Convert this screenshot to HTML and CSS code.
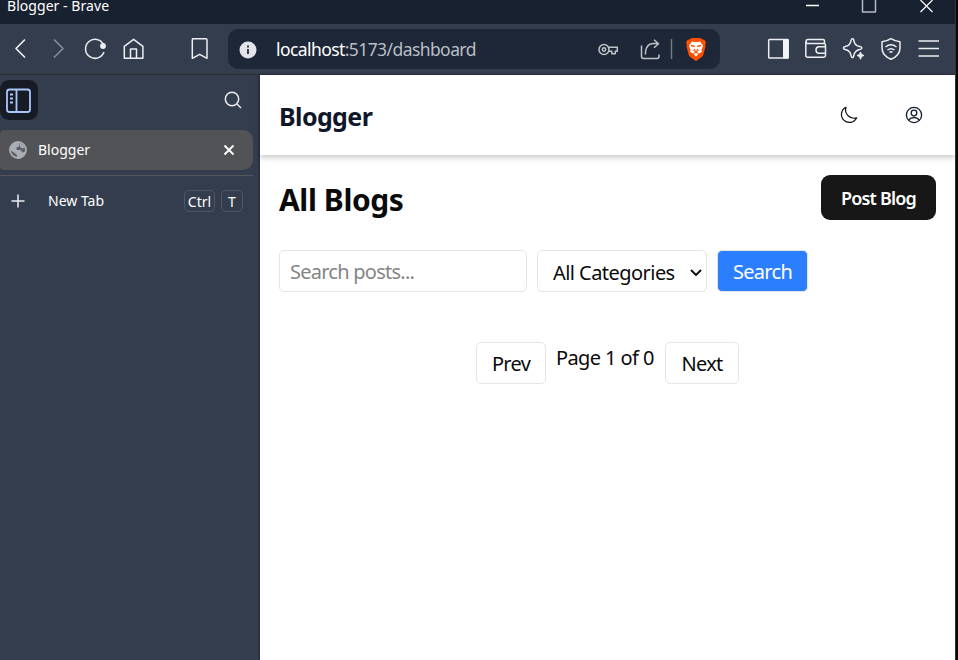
FILE: index.html
```html
<!DOCTYPE html>
<html lang="en">
<head>
<meta charset="utf-8">
<title>Blogger</title>
<link rel="stylesheet" href="styles.css">
</head>
<body>
<div class="screen">
  <div class="window">
    <header class="titlebar">
      <span class="window-title">Blogger - Brave</span>
      <svg class="window-controls" width="155" height="24" viewBox="800 0 155 24">
        <path d="M806 5.500h13" stroke="#fff"/>
        <rect x="862.500" y="-1" width="13" height="13" stroke="#b4b9c3"/>
        <path d="M920.500 0l12 12M932.500 0l-12 12" stroke="#fff" stroke-width="1.200"/>
      </svg>
    </header>
    <nav class="toolbar">
      <svg width="38" height="50" viewBox="1 24 38 50"><path d="M25 39.500L16 48.500l9 9" stroke-width="1.700"/></svg>
      <svg width="38" height="50" viewBox="39 24 38 50"><path d="M54 39.500l9 9-9 9" stroke="#858b97" stroke-width="1.700"/></svg>
      <svg width="38" height="50" viewBox="77 24 38 50"><path d="M103.500 44.500A9.500 9.500 0 1 0 104 52"/><circle cx="103" cy="46" r="2.900" fill="#eceef1" stroke="none"/></svg>
      <svg width="38" height="50" viewBox="115 24 38 50"><path d="M124.300 46.300l9.300-7 9.300 7v12H124.300zM130.500 58v-9h6v9"/></svg>
      <svg class="bookmark" width="38" height="50" viewBox="181 24 38 50"><path d="M192.500 38.700h13.500q1 0 1 1v18.600l-7.300-4-7.400 4V39.700q0-1 1-1z"/></svg>
      <div class="address">
        <svg width="40" height="40" viewBox="228 29 40 40"><circle cx="248" cy="50" r="8.500" fill="#e2e4e9" stroke="none"/><path d="M248 49v5M248 45.500v2" stroke="#202a3b" stroke-width="1.800"/></svg>
        <span class="url"><b>localhost</b>:5173/dashboard</span>
        <svg class="address-tools" width="130" height="40" viewBox="590 29 130 40">
          <g stroke="#bfc3ca"><circle cx="604" cy="49.500" r="5"/><circle cx="604" cy="49.500" r="1.700"/><path d="M608.500 47.300h8.800v4h-2v2.500h-3.500v-2.500h-3.500"/>
          <path d="M641.500 45.500v10.800q0 2.200 2.200 2.200h13.300q2 0 2-2.200v-1.800M645.500 54.500v-2.500q1-8.500 8-8.500h4.500M654 39.700l4.500 4-4.500 4"/></g>
          <path d="M671.500 39v20" stroke="#737985"/>
          <path d="M689.500 39.500l2-1.500h9l2 1.500 2 .3 1.500 3-.8 2 .3 1.700-2.300 8.500q-.5 1.500-1.700 2.300l-5.500 3.700-5.500-3.700q-1.200-.8-1.700-2.300l-2.300-8.500.3-1.700-.8-2 1.500-3z" fill="#ff5000" stroke="none"/>
          <path d="M692 41.500l4 .7 4-.7 3 4-1.500 4.500.3 2-2.800 1.500-3 3-3-3-2.800-1.500.3-2-1.500-4.500z" fill="#fff" stroke="none"/>
          <path d="M691 45.500l3.700 1M701 45.500l-3.700 1M695 49l-1 1.500 2 1.300 2-1.300-1-1.500M693.500 53.500l2.500-1 2.500 1" stroke="#ff5000" stroke-width="1.300"/>
        </svg>
      </div>
      <svg class="tools" width="195" height="50" viewBox="760 24 195 50">
        <rect x="768.700" y="39.500" width="19.500" height="18.500" rx=".8"/><path d="M783 39h5.500v19.500H783z" fill="#f3f4f6" stroke="none"/>
        <path d="M824.500 44v-3q0-1.500-1.500-1.500H808q-2 0-2 2.200 0 1.800 2 1.800h15.500q2 0 2 2v10q0 1.700-1.700 1.700h-16q-2 0-2-2v-14M825.500 46.700h-6.500q-3 0-3 3.300t3 3.300h6.500"/>
        <path d="M852.500 38.800q1.200 0 1.400 1.800.7 5 5.800 6 2.200.4 2.200 1.400t-2.200 1.600q-5 1-5.800 5.800-.3 2.200-1.400 2.200t-1.500-2.200q-.8-4.800-5.800-5.800-1.800-.4-1.800-1.600t1.800-1.400q5-1 5.800-6 .3-1.800 1.500-1.800z"/><path d="M860.500 52l1 2.500 2.500 1-2.500 1-1 2.700-1-2.700-2.500-1 2.500-1z" fill="#eceef1" stroke-width="1"/>
        <path d="M891 38.700q4 2.700 9 3v6.300q0 7.500-9 11.300-9-3.800-9-11.300v-6.300q5-.3 9-3z"/><path d="M885.500 47q5.500-4.300 11 0M887.500 50q3.500-2.700 7 0M889.500 52.300q1.500-1.200 3 0"/>
        <path d="M918.500 41h20.500M918.500 48.500h20.500M918.500 56h20.500" stroke-width="1.700"/>
      </svg>
    </nav>
    <div class="workspace">
      <aside class="sidebar">
        <div class="sidebar-top">
          <div class="panel-toggle"><svg width="38" height="40" viewBox="0 80 38 40"><g stroke="#a9c7fb" stroke-width="1.800"><rect x="7" y="89.500" width="23" height="22.500" rx="2.500"/><path d="M16.500 90v22M10 94.500h3M10 98.500h3M10 102.500h3"/></g></svg></div>
          <svg width="20" height="20" viewBox="223 90 20 20"><circle cx="232" cy="99" r="6.700"/><path d="M237 104l4 4"/></svg>
        </div>
        <div class="tab">
          <svg width="20" height="20" viewBox="8 140 20 20"><circle cx="18" cy="150" r="8" fill="#5d6066" stroke="#a9adb4" stroke-width="1.800"/><path d="M10 150q0-6 6.500-8l3 1v3l-3 1.500v2.500h4l2 2.500 3-1q-1 6-7 7.500l-1.500-1v-3l-3-2.500zM20 143l5 4-3 1.500-2-2z" fill="#a9adb4" stroke="none"/></svg>
          <span class="tab-name">Blogger</span>
          <svg class="close" width="12" height="12" viewBox="0 0 12 12"><path d="M1.500 1.500l9 9M10.500 1.500l-9 9" stroke="#fff" stroke-width="1.900"/></svg>
        </div>
        <div class="new-tab">
          <svg width="14" height="14" viewBox="0 0 14 14"><path d="M7 .5v13M.5 7h13"/></svg>
          <span class="new-name">New Tab</span>
          <kbd class="key key-ctrl">Ctrl</kbd><kbd class="key key-t">T</kbd>
        </div>
      </aside>
      <main class="page">
        <header class="site-header">
          <span class="brand">Blogger</span>
          <svg class="moon" width="20" height="20" viewBox="0 0 20 20"><path d="M7 2.200A8 8 0 1 0 17.700 12.800 8.500 8.500 0 0 1 7 2.200z" stroke="#111" stroke-width="1.200"/></svg>
          <svg width="20" height="20" viewBox="0 0 20 20"><g stroke="#111c30" stroke-width="1.300"><circle cx="10" cy="10" r="7.600"/><circle cx="10" cy="8" r="2.800"/><path d="M4.700 15q2-2.500 5.300-2.500t5.300 2.500"/></g></svg>
        </header>
        <div class="content">
          <div class="heading-row">
            <h1>All Blogs</h1>
            <button class="post">Post Blog</button>
          </div>
          <form class="filters">
            <input class="box query" type="text" placeholder="Search posts...">
            <div class="box category"><span>All Categories</span><svg width="14" height="10" viewBox="0 0 14 10"><path d="M2 2l5 5 5-5" stroke="#111" stroke-width="2"/></svg></div>
            <button class="box submit" type="button">Search</button>
          </form>
          <div class="pager">
            <button class="box prev">Prev</button>
            <span class="count">Page 1 of 0</span>
            <button class="box next">Next</button>
          </div>
        </div>
      </main>
    </div>
  </div>
  <div class="edge"></div>
</div>
</body>
</html>
```

FILE: styles.css
```css
* { box-sizing: border-box; }
body { margin: 0; overflow: hidden; font-family: "Noto Sans", "Open Sans", sans-serif; }
svg { display: block; flex: none; fill: none; stroke: #eceef1; stroke-width: 1.5; stroke-linejoin: round; }
button, input { font: inherit; margin: 0; }
.screen { display: flex; width: 958px; height: 660px; }
.window { display: flex; flex-direction: column; width: 955px; }
.edge { width: 3px; background: #080808; border-left: 1px solid #333; }

.titlebar { display: flex; justify-content: space-between; height: 24px; background: #182130; color: #fff; }
.window-title { margin: -4px 0 0 7px; font-size: 14px; line-height: 20px; letter-spacing: .05px; white-space: nowrap; }

.toolbar { display: flex; align-items: center; height: 51px; padding: 0 0 1px 1px; background: #343d4e; border-bottom: 1px solid #2b2d32; }
.bookmark { margin-left: 28px; }
.address { display: flex; align-items: center; width: 492px; height: 40px; margin-left: 9px; border-radius: 10px; background: #1e2737; }
.url { margin-left: 8px; color: #b9bec7; font-size: 17.5px; line-height: 40px; letter-spacing: -.58px; white-space: nowrap; }
.url b { color: #fff; font-weight: 400; }
.address-tools, .tools { margin-left: auto; }

.workspace { display: flex; flex: 1; }
.sidebar { width: 260px; padding-top: 5px; background: #343d4e; border-right: 2px solid #2c323e; color: #fff; }
.sidebar-top { display: flex; align-items: center; justify-content: space-between; height: 40px; padding-right: 15px; }
.panel-toggle { width: 38px; height: 40px; border-radius: 9px; background: #161b25; }
.tab { display: flex; align-items: center; width: 253px; height: 40px; margin-top: 10px; padding: 0 18px 0 8px; border-radius: 4px 10px 10px 4px; background: #525357; }
.tab-name { margin: -2px 0 0 10px; font-size: 14px; letter-spacing: 0; }
.close { margin-left: auto; }
.new-tab { display: flex; align-items: center; width: 253px; height: 51px; margin-top: 5px; padding: 0 10px 0 11px; border-top: 1px solid #55575d; font-size: 14px; }
.new-name { margin: -1px auto 0 23px; letter-spacing: 0; }
.key { display: flex; align-items: center; justify-content: center; height: 22px; padding-top: 1px; border: 1px solid #515760; border-radius: 5px; font: 14px "Noto Sans", sans-serif; }
.key-ctrl { width: 31px; }
.key-t { width: 22px; margin-left: 6px; }

.page { flex: 1; background: #fff; color: #0a0a0a; }
.site-header { display: flex; align-items: center; height: 80px; padding: 0 31px 0 19px; box-shadow: 0 4px 6px rgba(0, 0, 0, .1), 0 2px 4px rgba(0, 0, 0, .1); }
.brand { margin: 1px auto 0 0; color: #0f172a; font-size: 25px; font-weight: 700; letter-spacing: -.6px; }
.moon { margin-right: 45px; }
.content { padding: 20px 19px; font-size: 20px; }
.heading-row { display: flex; align-items: center; justify-content: space-between; height: 45px; }
h1 { margin: 4px 0 0; font-size: 30px; line-height: 40px; font-weight: 700; letter-spacing: -.4px; }
.post { width: 115px; height: 45px; padding: 0; border: 0; border-radius: 9px; background: #171717; color: #fff; font-size: 18px; font-weight: 600; letter-spacing: -.8px; white-space: nowrap; }
.filters { display: flex; gap: 10px; margin-top: 30px; }
.box { height: 42px; border: 1px solid #e5e5e5; border-radius: 5px; background: #fff; color: #0a0a0a; }
.query { width: 248px; padding: 1px 10px 0; letter-spacing: -.75px; }
.query::placeholder { color: #858585; opacity: 1; }
.category { display: flex; align-items: center; justify-content: space-between; width: 170px; padding: 3px 3px 0 15px; letter-spacing: -.55px; white-space: nowrap; }
.submit { width: 91px; padding: 1px 0 0; background: #2b7fff; color: #fff; letter-spacing: -.7px; }
.pager { display: flex; justify-content: center; gap: 10px; margin-top: 50px; letter-spacing: -.6px; }
.pager .box { padding: 1px 0 0; letter-spacing: -.7px; }
.prev { width: 70px; }
.next { width: 74px; }
.count { width: 99px; line-height: 31px; white-space: nowrap; }
```
